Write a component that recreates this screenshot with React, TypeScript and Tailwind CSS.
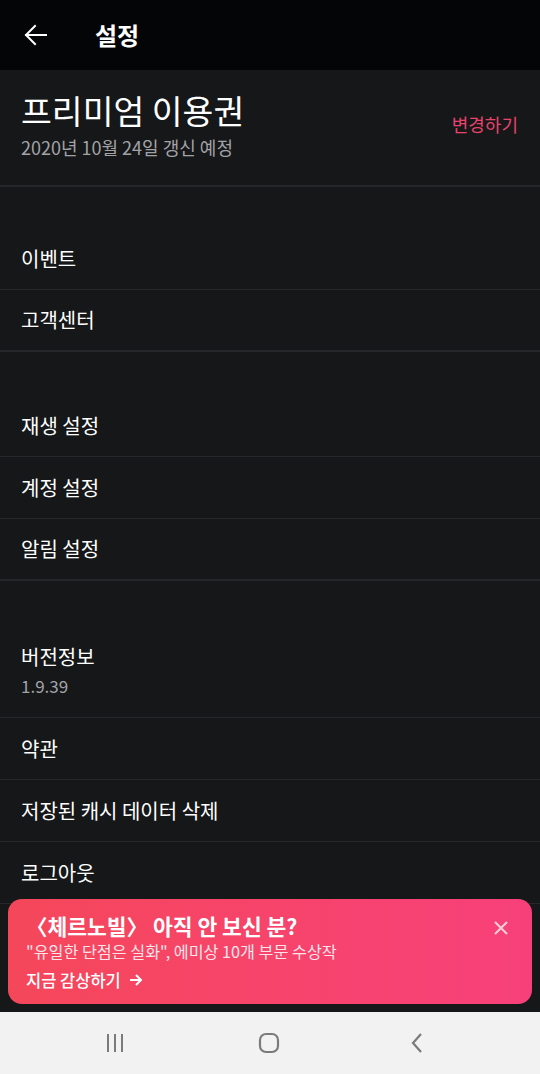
import React from "react";

const font = { fontFamily: '"Noto Sans CJK KR", "Noto Sans", sans-serif' };

function Row({ label, thick }: { label: string; thick?: boolean }) {
  return (
    <div
      className={`h-[62px] flex items-center px-[21px] text-[20px] text-white ${
        thick ? "border-b-2" : "border-b"
      } border-[#26272a]`}
    >
      {label}
    </div>
  );
}

export default function App() {
  return (
    <div className="relative w-[540px] h-[1074px] flex flex-col overflow-hidden bg-[#161719]" style={font}>
      <header className="h-[70px] shrink-0 bg-[#030507] flex items-center">
        <div className="w-[95px] flex items-center pl-[24px]">
          <svg width="24" height="22" viewBox="0 0 24 22" fill="none" stroke="white" strokeWidth="2" strokeLinecap="square">
            <path d="M2 11 H22" />
            <path d="M11 2 L2 11 L11 20" />
          </svg>
        </div>
        <div className="text-white text-[24px] font-bold leading-none">설정</div>
      </header>

      <main className="flex-1 overflow-hidden">
        <section className="h-[117px] border-b-2 border-[#26272a] flex items-center justify-between pl-[21px] pr-[22px]">
          <div className="flex flex-col -mt-[8px]">
            <div className="text-white text-[33.5px] leading-[44px]">프리미엄 이용권</div>
            <div className="text-[#a2a3a6] text-[18px] leading-[26px] mt-[2px]">2020년 10월 24일 갱신 예정</div>
          </div>
          <div className="text-[#e8436c] text-[18px] -mt-[6px]">변경하기</div>
        </section>

        <div className="h-[41px]" />
        <Row label="이벤트" />
        <Row label="고객센터" thick />

        <div className="h-[43px]" />
        <Row label="재생 설정" />
        <Row label="계정 설정" />
        <Row label="알림 설정" thick />

        <div className="h-[45px]" />
        <div className="h-[92px] border-b border-[#26272a] flex flex-col px-[21px] pt-[17px]">
          <div className="text-white text-[20px] leading-[28px]">버전정보</div>
          <div className="text-[#a2a3a6] text-[17px] leading-[26px] mt-[2px]">1.9.39</div>
        </div>
        <Row label="약관" />
        <Row label="저장된 캐시 데이터 삭제" />
        <Row label="로그아웃" />
      </main>

      <div className="absolute left-[8px] right-[8px] top-[899px] h-[105px] rounded-[14px] bg-gradient-to-r from-[#f5475a] to-[#f7407a] px-[18px] pt-[10px]">
        <div className="flex items-start justify-between">
          <div className="text-white text-[21.5px] font-bold leading-[34px]">〈체르노빌〉 아직 안 보신 분?</div>
          <svg className="mt-[12px] mr-[6px]" width="14" height="14" viewBox="0 0 14 14" stroke="#fbd0da" strokeWidth="2">
            <path d="M1 1 L13 13 M13 1 L1 13" />
          </svg>
        </div>
        <div className="text-[#fde4ea] text-[16.2px] leading-[22px] -mt-[3px]">"유일한 단점은 실화", 에미상 10개 부문 수상작</div>
        <div className="flex items-center gap-[8px] text-white text-[16.5px] font-medium leading-[26px] mt-[5px]">
          <span>지금 감상하기</span>
          <svg width="14" height="14" viewBox="0 0 14 14" fill="none" stroke="white" strokeWidth="2">
            <path d="M1 7 H12 M7 2 L12 7 L7 12" />
          </svg>
        </div>
      </div>

      <nav className="h-[62px] shrink-0 bg-[#f2f2f2] flex items-center pl-[105px]">
        <svg width="20" height="20" viewBox="0 0 20 20" stroke="#7b7b7b" strokeWidth="2">
          <path d="M3 1 V19 M10 1 V19 M17 1 V19" />
        </svg>
        <svg className="ml-[133px]" width="22" height="22" viewBox="0 0 22 22" fill="none" stroke="#7b7b7b" strokeWidth="2.2">
          <rect x="2" y="2" width="18" height="18" rx="6" />
        </svg>
        <svg className="ml-[129px]" width="16" height="22" viewBox="0 0 16 22" fill="none" stroke="#7b7b7b" strokeWidth="2.2">
          <path d="M12 2 L4 11 L12 20" />
        </svg>
      </nav>
    </div>
  );
}
